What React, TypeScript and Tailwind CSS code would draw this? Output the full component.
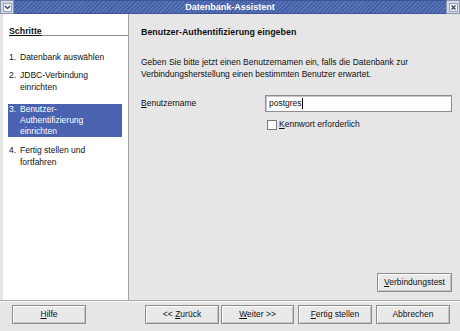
import React from "react";

function Btn({ children, className = "" }: { children: React.ReactNode; className?: string }) {
  return (
    <div
      className={`h-[19px] flex items-center justify-center bg-[#e9e9e9] border border-[#8c8c8c] shadow-[inset_1px_1px_0_#ffffff,inset_-1px_-1px_0_#c4c4c4] ${className}`}
    >
      {children}
    </div>
  );
}

export default function App() {
  return (
    <div className="w-[460px] h-[331px] bg-[#e6e6e6] flex flex-col overflow-hidden font-['Liberation_Sans',Arial,sans-serif] text-[8.5px] leading-[11px] text-[#111]">
      {/* Title bar */}
      <div className="h-[14px] flex shrink-0 bg-[#e6e6e6]">
        <div className="w-[14px] h-[14px] bg-[#d6d9e4] border border-[#8a93b0] flex items-center justify-center">
          <div className="w-[9px] h-[9px] bg-[#eef0f6] border border-[#9aa2bd] flex items-center justify-center">
            <svg width="7" height="5" viewBox="0 0 7 5">
              <path d="M1 1 L3.5 3.5 L6 1" stroke="#2c3a6a" strokeWidth="1.2" fill="none" />
            </svg>
          </div>
        </div>
        <div className="flex-1 h-[14px] border-y border-[#3e5596] bg-[repeating-linear-gradient(135deg,#5774ba_0px,#5774ba_1.5px,#4660a6_1.5px,#4660a6_3px)] flex items-center justify-center">
          <span className="text-white font-bold text-[9px] leading-[12px]">Datenbank-Assistent</span>
        </div>
        <div className="w-[14px] h-[14px] bg-[#d6d9e4] border border-[#8a93b0] flex items-center justify-center">
          <div className="w-[9px] h-[9px] bg-[#eef0f6] border border-[#9aa2bd] flex items-center justify-center">
            <svg width="5" height="5" viewBox="0 0 5 5">
              <path d="M0.5 0.5 L4.5 4.5 M4.5 0.5 L0.5 4.5" stroke="#2c3a6a" strokeWidth="1.1" />
            </svg>
          </div>
        </div>
      </div>

      {/* Main */}
      <div className="flex flex-1 pl-[3px]">
        {/* Left steps panel */}
        <div className="w-[126px] bg-white border-r border-[#a3a3a3] pt-[12px]">
          <div className="ml-[6px] border-b border-[#8e8e8e] h-[10px]">
            <span className="font-bold text-[8.8px] leading-[9px] underline">Schritte</span>
          </div>
          <div className="mt-[15px] flex flex-col leading-[12px]">
            <div className="flex pl-[6px]">
              <span className="w-[11px] shrink-0">1.</span>
              <span>Datenbank auswählen</span>
            </div>
            <div className="flex pl-[6px] mt-[6px]">
              <span className="w-[11px] shrink-0">2.</span>
              <span>
                JDBC-Verbindung
                <br />
                einrichten
              </span>
            </div>
            <div className="flex ml-[5px] w-[114px] pl-[1px] mt-[11px] bg-[#4963b1] text-white leading-[11px]">
              <span className="w-[11px] shrink-0">3.</span>
              <span>
                Benutzer-
                <br />
                Authentifizierung
                <br />
                einrichten
              </span>
            </div>
            <div className="flex pl-[6px] mt-[7px]">
              <span className="w-[11px] shrink-0">4.</span>
              <span>
                Fertig stellen und
                <br />
                fortfahren
              </span>
            </div>
          </div>
        </div>

        {/* Right content */}
        <div className="flex-1 flex flex-col pl-[12px] pr-[8px] pt-[13px] pb-[8px]">
          <div className="font-bold text-[8.9px] leading-[11px]">Benutzer-Authentifizierung eingeben</div>
          <div className="mt-[18px] leading-[12px]">
            Geben Sie bitte jetzt einen Benutzernamen ein, falls die Datenbank zur
            <br />
            Verbindungsherstellung einen bestimmten Benutzer erwartet.
          </div>
          <div className="mt-[15px] flex items-center">
            <span className="w-[124px] shrink-0">
              <span className="underline">B</span>enutzername
            </span>
            <div className="flex-1 h-[17px] bg-white border border-[#8e8e8e] shadow-[inset_1px_1px_0_#c8c8c8] flex items-center pl-[3px]">
              <span>postgres</span>
              <span className="w-[1px] h-[11px] bg-black"></span>
            </div>
          </div>
          <div className="mt-[7px] flex items-center pl-[126px]">
            <div className="w-[10px] h-[10px] bg-white border border-[#7a7a7a]"></div>
            <span className="ml-[2px]">
              <span className="underline">K</span>ennwort erforderlich
            </span>
          </div>
          <div className="flex-1"></div>
          <div className="flex justify-end">
            <Btn className="w-[75px] h-[18px]">
              <span>
                <span className="underline">V</span>erbindungstest
              </span>
            </Btn>
          </div>
        </div>
      </div>

      {/* Separator */}
      <div className="h-[2px] border-t border-[#a8a8a8] bg-[#fafafa] shrink-0"></div>

      {/* Bottom buttons */}
      <div className="h-[29px] shrink-0 flex items-start pt-[3px] pl-[12px]">
        <Btn className="w-[74px]">
          <span>
            <span className="underline">H</span>ilfe
          </span>
        </Btn>
        <Btn className="w-[74px] ml-[59px]">
          <span>
            &lt;&lt; <span className="underline">Z</span>urück
          </span>
        </Btn>
        <Btn className="w-[73px] ml-[2px] border-[#4a4a4a]">
          <span>
            <span className="underline">W</span>eiter &gt;&gt;
          </span>
        </Btn>
        <Btn className="w-[74px] ml-[4px]">
          <span>
            <span className="underline">F</span>ertig stellen
          </span>
        </Btn>
        <Btn className="w-[74px] ml-[4px]">
          <span>Abbrechen</span>
        </Btn>
      </div>
    </div>
  );
}
